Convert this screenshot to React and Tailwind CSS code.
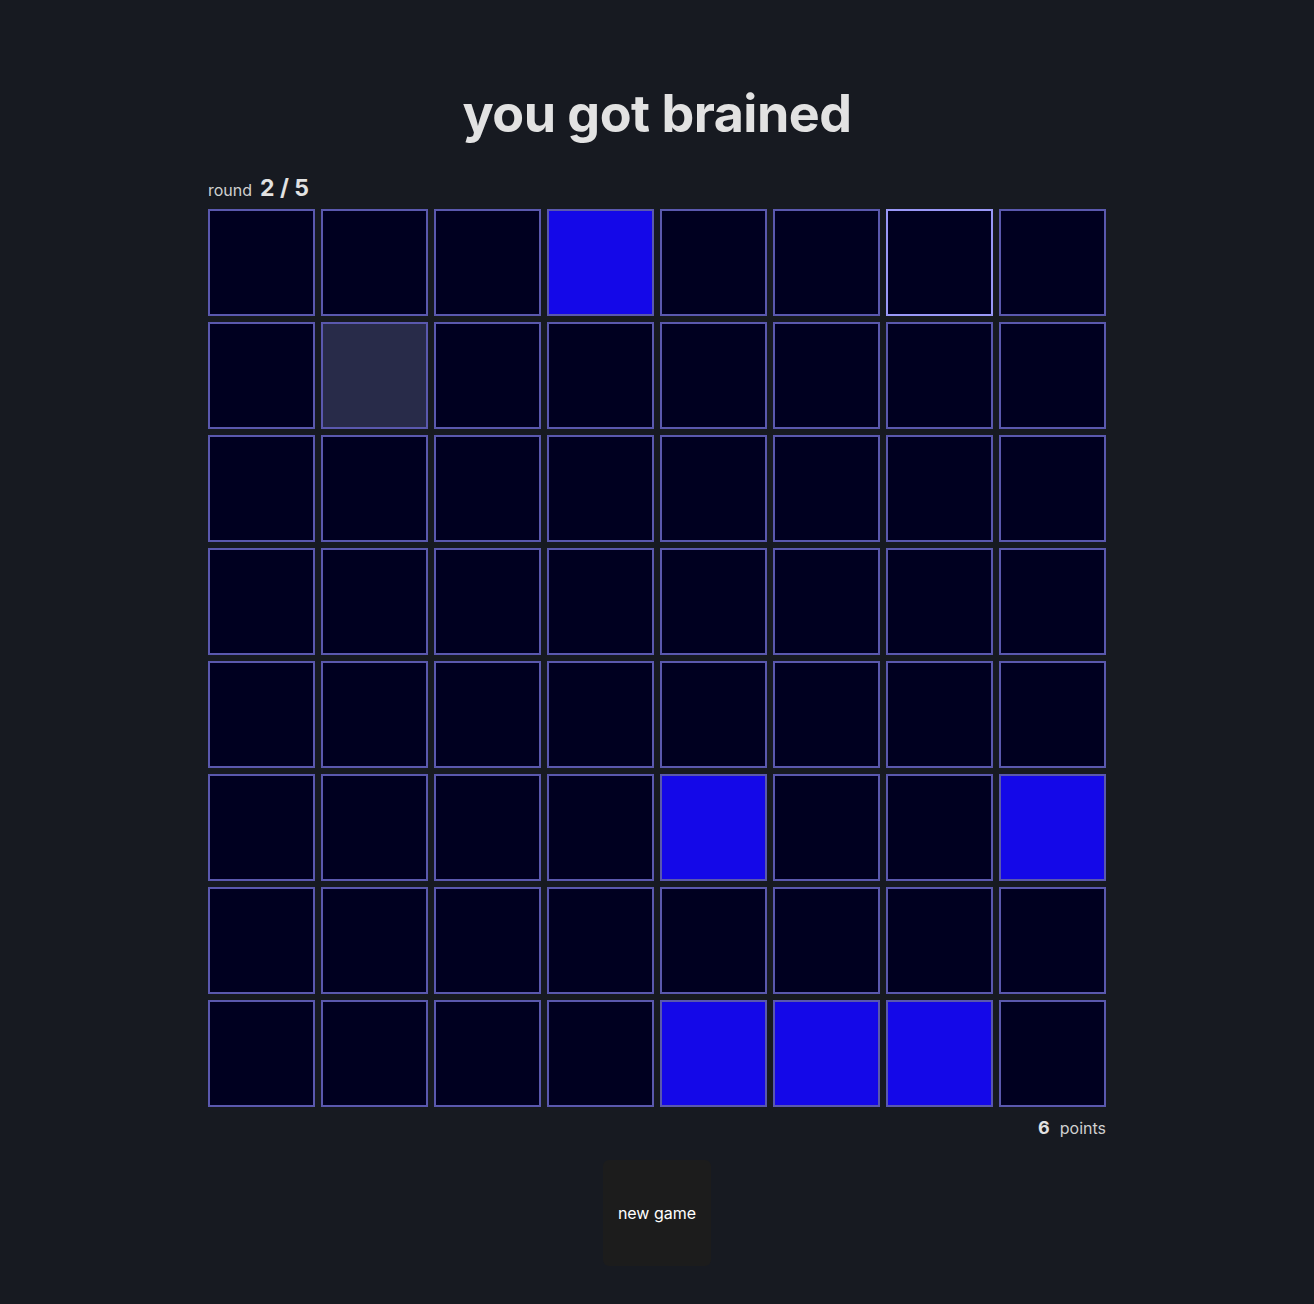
const CELLS = 64;

// cells that are lit up (row * 8 + col)
const lit = [3, 44, 47, 60, 61, 62];
const missed = 9;
const hovered = 6;

function Cell({ index }) {
    let cls = 'bg-[#000020] border-[#5a58ae]';
    if (lit.includes(index)) cls = 'bg-[#1408e8] border-[#5a58ae]';
    else if (index === missed) cls = 'bg-[#282b49] border-[#5a58ae]';
    else if (index === hovered) cls = 'bg-[#000020] border-[#9a98f8]';
    return <div className={`w-[107px] h-[107px] border-2 ${cls}`} />;
}

export default function App() {
    return (
        <div
            className="min-h-[1304px] bg-[#171a21] text-[#e2e2e2] flex flex-col items-center"
            style={{ fontFamily: 'Inter, "Noto Sans", sans-serif' }}
        >
            <h1 className="mt-[82px] text-[52px] leading-[64px] font-bold tracking-[-0.5px]">you got brained</h1>

            <div className="mt-[25px] w-[898px]">
                {/* Round */}
                <div className="flex items-baseline gap-2 h-[30px]">
                    <span className="text-[16px] text-[#d0d0d0]">round</span>
                    <span className="text-[23px] font-bold">2 / 5</span>
                </div>

                {/* Board */}
                <div className="grid grid-cols-8 gap-[6px] mt-[8px]">
                    {Array.from({ length: CELLS }).map((_, i) => (
                        <Cell key={i} index={i} />
                    ))}
                </div>

                {/* Points */}
                <div className="flex justify-end items-baseline gap-[10px] mt-[7px]">
                    <span className="text-[18px] font-bold">6</span>
                    <span className="text-[16px] text-[#d0d0d0]">points</span>
                </div>
            </div>

            <button className="mt-[19px] w-[108px] h-[106px] bg-[#1c1c1c] text-[16px] text-white rounded-md">
                new game
            </button>
        </div>
    );
}
